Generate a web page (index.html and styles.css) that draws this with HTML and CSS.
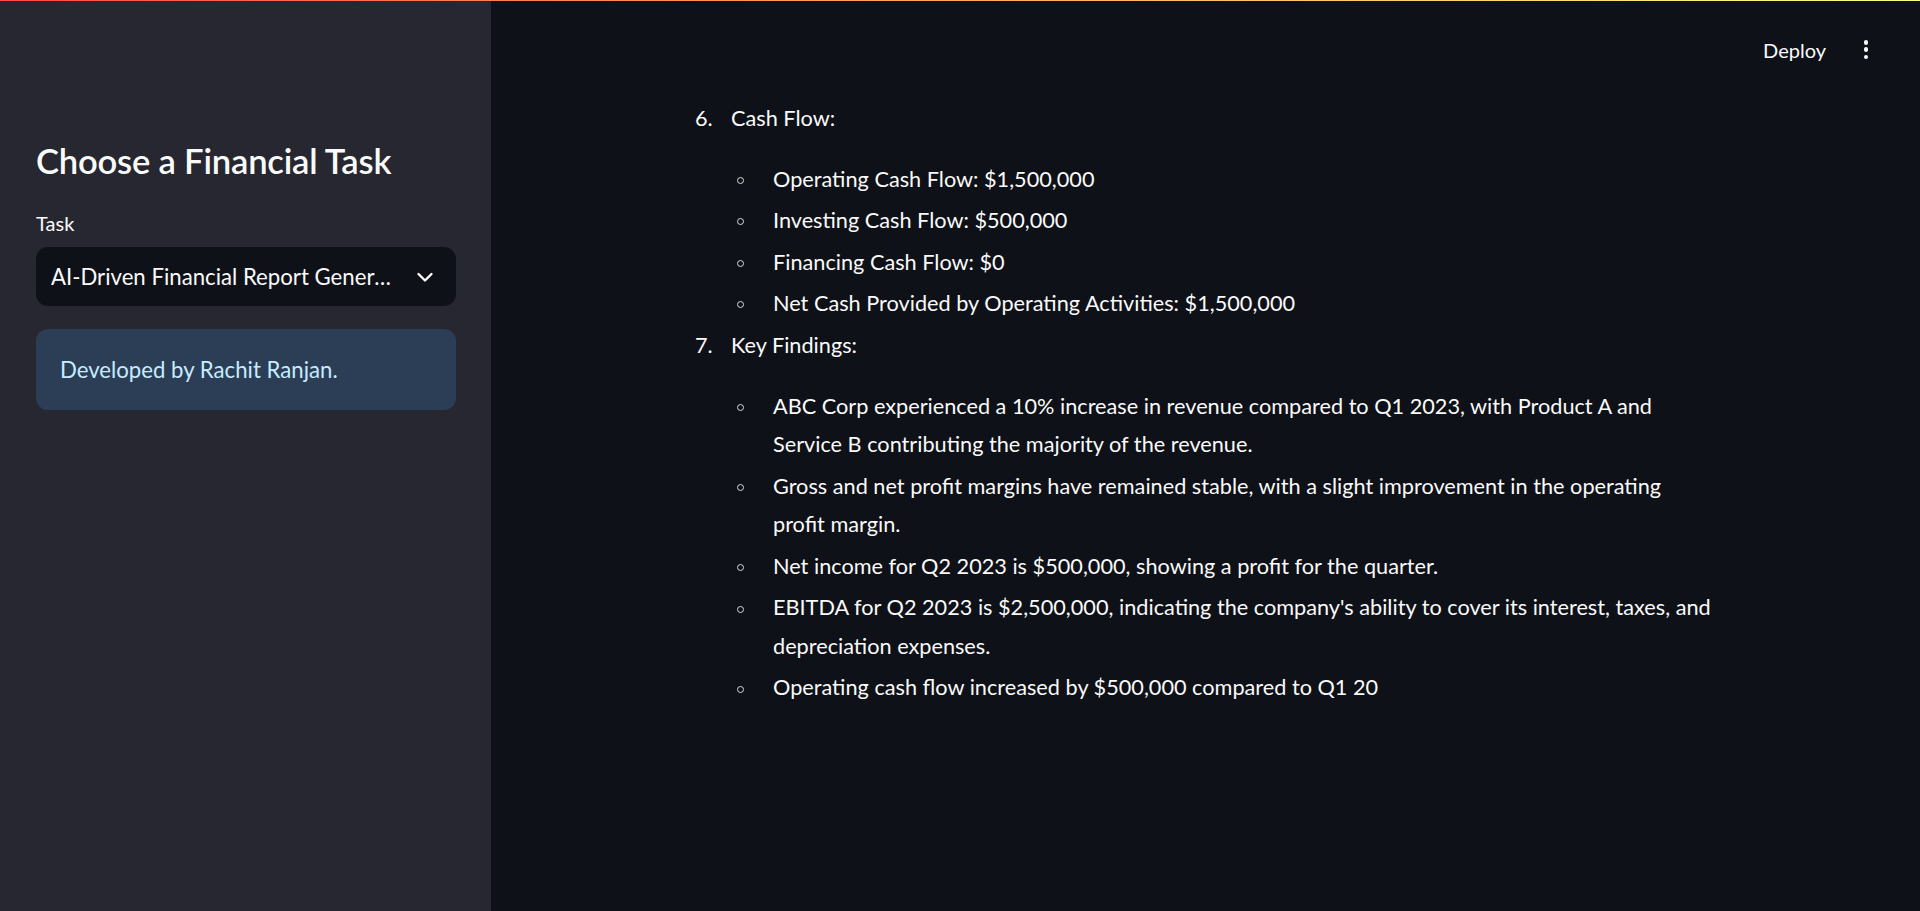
FILE: index.html
```html
<!DOCTYPE html>
<html lang="en">
<head>
<meta charset="utf-8">
<title>AI-Driven Financial Report Generation</title>
<link rel="stylesheet" href="styles.css">
</head>
<body>
<div class="decoration"></div>
<div class="app">
  <aside class="sidebar">
    <h2 class="sidebar-title">Choose a Financial Task</h2>
    <label class="field-label">Task</label>
    <div class="select">
      <span class="select-value">AI-Driven Financial Report Generation</span>
      <svg class="chevron" viewBox="0 0 24 24" width="24" height="24" aria-hidden="true"><path d="M5.5 9 L12 15.5 L18.5 9" fill="none" stroke="#fafafa" stroke-width="2.4" stroke-linecap="round" stroke-linejoin="round"/></svg>
    </div>
    <div class="info">Developed by Rachit Ranjan.</div>
  </aside>
  <main class="main">
    <header class="toolbar">
      <button class="deploy">Deploy</button>
      <button class="menu" aria-label="Main menu"><span class="dot"></span><span class="dot"></span><span class="dot"></span></button>
    </header>
    <section class="block">
      <ol class="report">
        <li class="item">
          <span class="num">6.</span>
          <div class="item-body">
            <p class="item-title">Cash Flow:</p>
            <ul class="sub">
              <li class="sub-item"><span class="circle"></span><span class="sub-text">Operating Cash Flow: $1,500,000</span></li>
              <li class="sub-item"><span class="circle"></span><span class="sub-text">Investing Cash Flow: $500,000</span></li>
              <li class="sub-item"><span class="circle"></span><span class="sub-text">Financing Cash Flow: $0</span></li>
              <li class="sub-item"><span class="circle"></span><span class="sub-text">Net Cash Provided by Operating Activities: $1,500,000</span></li>
            </ul>
          </div>
        </li>
        <li class="item">
          <span class="num">7.</span>
          <div class="item-body">
            <p class="item-title">Key Findings:</p>
            <ul class="sub">
              <li class="sub-item"><span class="circle"></span><span class="sub-text">ABC Corp experienced a 10% increase in revenue compared to Q1 2023, with Product A and<br>Service B contributing the majority of the revenue.</span></li>
              <li class="sub-item"><span class="circle"></span><span class="sub-text">Gross and net profit margins have remained stable, with a slight improvement in the operating<br>profit margin.</span></li>
              <li class="sub-item"><span class="circle"></span><span class="sub-text">Net income for Q2 2023 is $500,000, showing a profit for the quarter.</span></li>
              <li class="sub-item"><span class="circle"></span><span class="sub-text">EBITDA for Q2 2023 is $2,500,000, indicating the company's ability to cover its interest, taxes, and<br>depreciation expenses.</span></li>
              <li class="sub-item"><span class="circle"></span><span class="sub-text">Operating cash flow increased by $500,000 compared to Q1 20</span></li>
            </ul>
          </div>
        </li>
      </ol>
    </section>
  </main>
</div>
</body>
</html>
```

FILE: styles.css
```css
* {
  box-sizing: border-box;
}

html, body {
  margin: 0;
  padding: 0;
  height: 100%;
}

body {
  display: flex;
  flex-direction: column;
  height: 911px;
  overflow: hidden;
  background: #0e1117;
  color: #fafafa;
  font-family: Lato, "Source Sans Pro", "Noto Sans", sans-serif;
  font-size: 21.7px;
}

.decoration {
  height: 1px;
  flex: none;
  background: linear-gradient(90deg, #ff4b4b 0%, #ffa05a 45%, #fffd80 100%);
}

.app {
  flex: 1;
  display: flex;
  min-height: 0;
}

/* Sidebar */
.sidebar {
  width: 491px;
  flex: none;
  background: #262730;
  padding: 139px 35px 0 36px;
  display: flex;
  flex-direction: column;
}

.sidebar-title {
  margin: 0 0 28px 0;
  font-size: 34.6px;
  font-weight: 600;
  line-height: 41px;
  color: #fafafa;
  letter-spacing: -0.2px;
}

.field-label {
  font-size: 20px;
  line-height: 28px;
  color: #fafafa;
  margin-bottom: 10px;
}

.select {
  height: 59px;
  background: #0e1117;
  border-radius: 12px;
  display: flex;
  align-items: center;
  padding: 0 19px 0 15px;
}

.select-value {
  flex: 1;
  min-width: 0;
  white-space: nowrap;
  overflow: hidden;
  text-overflow: ellipsis;
  font-size: 22.2px;
  color: #fafafa;
}

.chevron {
  flex: none;
  margin-left: 22px;
}

.info {
  margin-top: 23px;
  background: #2b3e56;
  border-radius: 12px;
  padding: 24px 24px;
  font-size: 22.2px;
  line-height: 33px;
  color: #c7ebff;
}

/* Main */
.main {
  flex: 1;
  min-width: 0;
  display: flex;
  flex-direction: column;
  background: #0e1117;
}

.toolbar {
  height: 97.5px;
  flex: none;
  display: flex;
  align-items: center;
  justify-content: flex-end;
  padding: 0 36px 0 0;
  gap: 10px;
}

.deploy {
  background: transparent;
  border: none;
  color: #fafafa;
  font-family: inherit;
  font-size: 20px;
  padding: 8px 12px;
  line-height: 28px;
}

.menu {
  width: 36px;
  height: 36px;
  background: transparent;
  border: none;
  padding: 0;
  display: flex;
  flex-direction: column;
  align-items: center;
  justify-content: center;
  gap: 2.6px;
}

.dot {
  width: 4.6px;
  height: 4.6px;
  border-radius: 50%;
  background: #fafafa;
}

.block {
  width: 1056px;
  margin: 0 auto;
  padding: 0 0 0 17.5px;
}

.report {
  list-style: none;
  margin: 0;
  padding: 0;
}

.item {
  display: grid;
  grid-template-columns: 36px 1fr;
  line-height: 38.4px;
}

.item + .item {
  margin-top: 3.2px;
}

.item-title {
  margin: 0 0 22.6px 0;
}

.sub {
  list-style: none;
  margin: 0;
  padding: 0;
}

.sub-item {
  display: grid;
  grid-template-columns: 42px 1fr;
}

.sub-item + .sub-item {
  margin-top: 3.2px;
}

.circle {
  width: 7px;
  height: 7px;
  margin: 17.1px 0 0 5.5px;
  border: 1px solid #d9d9d9;
  border-radius: 50%;
}
```
